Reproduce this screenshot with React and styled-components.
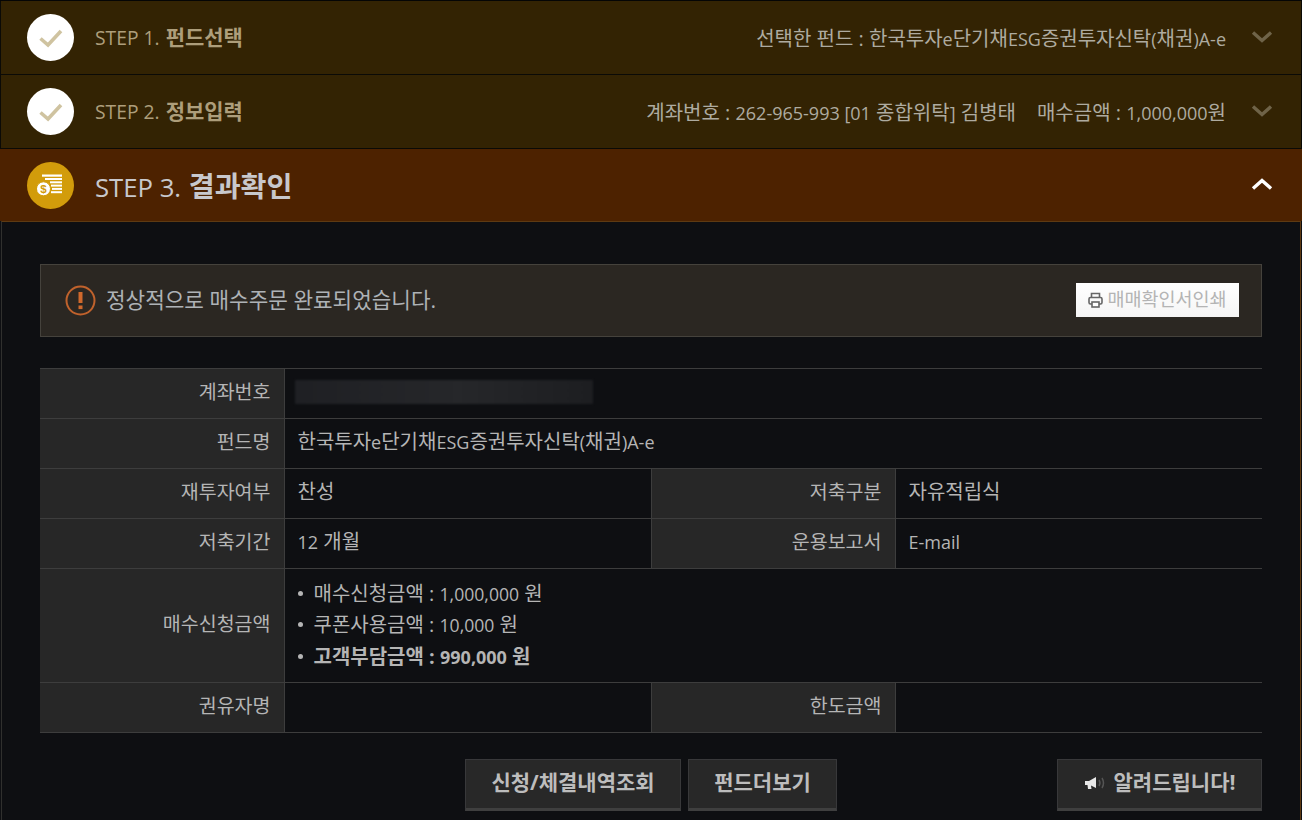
import React from "react";
import styled, { createGlobalStyle } from "styled-components";

const Global = createGlobalStyle`
  html, body { margin: 0; padding: 0; background: #0e0f12; height: 820px; overflow: hidden; }
  body { font-family: "Open Sans", "Noto Sans CJK KR", "Noto Sans", sans-serif; color: #bbb; font-size: 16px; }
  * { box-sizing: border-box; }
`;

const Page = styled.div`
  width: 1302px;
  height: 820px;
  overflow: hidden;
  border-top: 1px solid #050505;
`;

const StepBar = styled.div`
  height: ${p => (p.$active ? "72px" : "74px")};
  border: 1px solid #0b0a06;
  border-width: 0 1px 1px 1px;
  background: ${p => (p.$active ? "#4d2200" : "#332303")};
  display: flex;
  align-items: center;
  padding: 0 28px 0 26px;
  ${p => p.$active && "border: 0; padding-left: 27px; padding-right: 29px;"}
`;

const Circle = styled.span`
  width: 47px;
  height: 47px;
  border-radius: 50%;
  background: ${p => (p.$gold ? "#d29c0b" : "#fff")};
  display: flex;
  align-items: center;
  justify-content: center;
  flex: none;
`;

const StepTitle = styled.div`
  margin-left: 21px;
  font-size: ${p => (p.$active ? "25.7px" : "19.3px")};
  color: ${p => (p.$active ? "#c8c8cc" : "#ad9e7b")};
  line-height: 1;
  white-space: nowrap;
  position: relative;
  top: ${p => (p.$active ? "1px" : "0")};
  b {
    font-weight: 700;
    font-size: ${p => (p.$active ? "28.2px" : "21px")};
    margin-left: 1px;
  }
`;

const Latin = styled.span`
  font-size: ${p => p.$size || 18}px;
`;

const Summary = styled.div`
  margin-left: auto;
  color: #aeaba0;
  font-size: 20px;
  white-space: nowrap;
  display: flex;
  gap: 21px;
`;

const Chevron = styled.svg`
  width: 22px;
  height: 14px;
  margin-left: ${p => (p.$push ? "auto" : "25px")};
  flex: none;
  position: relative;
  top: -1px;
`;

const Panel = styled.div`
  margin: 0 1px;
  border: 1px solid #5e3a12;
  border-bottom: 0;
  border-left-color: #30302e;
  height: 600px;
  padding: 42px 38px 0 38px;
`;

const Notice = styled.div`
  height: 73px;
  background: #2b2722;
  border: 1px solid #45423c;
  display: flex;
  align-items: center;
  padding: 0 22px 0 24px;
`;

const NoticeText = styled.span`
  margin-left: 10px;
  font-size: 21.3px;
  color: #aeb2b6;
  position: relative;
  top: -2px;
`;

const PrintButton = styled.button`
  margin-left: auto;
  width: 163px;
  height: 34px;
  border: 0;
  padding: 0 0 4px;
  background: linear-gradient(#ffffff, #f5f5f5);
  color: #b4b4b4;
  font: inherit;
  font-size: 18.5px;
  display: flex;
  align-items: center;
  justify-content: center;
  gap: 4px;
  position: relative;
  top: -1px;
  svg { position: relative; top: 2px; }
`;

const Table = styled.table`
  width: 1222px;
  margin-top: 31px;
  border-collapse: collapse;
  table-layout: fixed;
  border-top: 1px solid #3d3d3d;
  border-bottom: 1px solid #3d3d3d;
`;

const Row = styled.tr`
  height: ${p => p.$h || 50}px;
  border-bottom: 1px solid #3d3d3d;
`;

const Th = styled.th`
  background: #272727;
  font-weight: 400;
  text-align: right;
  padding: 0 13px 4px 0;
  color: #b5b5b5;
  font-size: 19.5px;
  line-height: 1.2;
  border-right: 1px solid #3d3d3d;
  border-left: ${p => (p.$mid ? "1px solid #3d3d3d" : "0")};
`;

const Td = styled.td`
  padding: 0 13px 4px 13px;
  color: #b5b5b5;
  font-size: 20px;
  line-height: 1.2;
  white-space: nowrap;
`;

const Masked = styled.div`
  width: 298px;
  height: 24px;
  margin: 0 0 0 -3px;
  background: linear-gradient(90deg, #1f2024, #26272a 55%, #1d1e21);
  filter: blur(1px);
`;

const AmountList = styled.ul`
  list-style: none;
  margin: 0;
  padding: 3px 0 0 0;
`;

const AmountItem = styled.li`
  position: relative;
  padding-left: 16px;
  height: 31.5px;
  line-height: 31px;
  font-weight: ${p => (p.$strong ? 700 : 400)};
  &::before {
    content: "";
    position: absolute;
    left: 0;
    top: 13px;
    width: 5px;
    height: 5px;
    border-radius: 50%;
    background: #b5b5b5;
  }
`;

const Actions = styled.div`
  display: grid;
  grid-template-columns: 1fr auto 1fr;
  margin-top: 26px;
`;

const Center = styled.div`
  grid-column: 2;
  display: flex;
  gap: 7px;
`;

const ActionButton = styled.button`
  height: 52px;
  width: ${p => p.$w}px;
  justify-self: ${p => (p.$end ? "end" : "auto")};
  background: #282828;
  border: 1px solid #38383a;
  border-bottom: 3px solid #3f3f3f;
  color: #bdbdbd;
  font: inherit;
  font-size: 21px;
  font-weight: 700;
  line-height: 1;
  display: flex;
  align-items: center;
  justify-content: center;
  gap: 7px;
  padding: 0 0 3px;
`;

const Check = () => (
  <svg width="26" height="20" viewBox="0 0 26 20" fill="none">
    <path d="M2.5 10.5 L10 17 L23 3" stroke="#cfc3a0" strokeWidth="3.6" />
  </svg>
);

const Coin = () => (
  <svg width="28" height="26" viewBox="0 0 28 26">
    <g fill="#fff">
      <rect x="5" y="2.5" width="20" height="2.2" />
      <rect x="8" y="6" width="17" height="2" />
      <rect x="13" y="9.3" width="12" height="2" />
      <rect x="14" y="12.6" width="11" height="2" />
      <rect x="15" y="15.9" width="10" height="2" />
      <rect x="14" y="19.2" width="11" height="2" />
      <circle cx="6.5" cy="16.8" r="7" stroke="#d29c0b" strokeWidth="1" />
    </g>
    <text x="6.5" y="21" textAnchor="middle" fontSize="11.5" fontWeight="700" fill="#d29c0b" fontFamily="Liberation Sans">$</text>
  </svg>
);

const Down = () => (
  <Chevron viewBox="0 0 22 14" fill="none">
    <path d="M2 2.5 L11 10.5 L20 2.5" stroke="#6f6348" strokeWidth="3.4" />
  </Chevron>
);

const Up = () => (
  <Chevron $push viewBox="0 0 22 14" fill="none">
    <path d="M2 11.5 L11 3.5 L20 11.5" stroke="#ffffff" strokeWidth="3.4" />
  </Chevron>
);

const Alert = () => (
  <svg width="31" height="31" viewBox="0 0 31 31" fill="none">
    <circle cx="15.5" cy="15.5" r="14" stroke="#c0622c" strokeWidth="2" />
    <rect x="13.5" y="7" width="4" height="11" fill="#d0692c" />
    <rect x="13.5" y="20.5" width="4" height="3.6" fill="#d0692c" />
  </svg>
);

const Printer = () => (
  <svg width="15" height="16" viewBox="0 0 15 16" fill="none" stroke="#666" strokeWidth="1.6">
    <path d="M3.5 5.5 V1.5 H11.5 V5.5" />
    <rect x="1" y="5.5" width="13" height="6.5" rx="1.5" />
    <rect x="4" y="10" width="7" height="5" fill="#fff" />
  </svg>
);

const Speaker = () => (
  <svg width="23" height="16" viewBox="0 0 23 16">
    <path d="M1 6 L5 6 L12 2 V13 L7 10.5 L7.5 14 L4 14 L3.5 10 L1 10 Z" fill="#e8e8e8" />
    <path d="M15 5 Q17 8 15 11 M18 3 Q21 8 18 13" fill="none" stroke="#555" strokeWidth="1.5" />
  </svg>
);

const FundName = () => (
  <>
    한국투자<Latin>e</Latin>단기채<Latin>ESG</Latin>증권투자신탁<Latin>(</Latin>채권<Latin>)A-e</Latin>
  </>
);

export default function App() {
  return (
    <Page>
      <Global />
      <StepBar>
        <Circle><Check /></Circle>
        <StepTitle>STEP 1. <b>펀드선택</b></StepTitle>
        <Summary>
          <span>선택한 펀드 : <FundName /></span>
        </Summary>
        <Down />
      </StepBar>
      <StepBar>
        <Circle><Check /></Circle>
        <StepTitle>STEP 2. <b>정보입력</b></StepTitle>
        <Summary>
          <span>계좌번호 : <Latin>262-965-993 [01</Latin> 종합위탁<Latin>]</Latin> 김병태</span>
          <span>매수금액 : <Latin>1,000,000</Latin>원</span>
        </Summary>
        <Down />
      </StepBar>
      <StepBar $active>
        <Circle $gold><Coin /></Circle>
        <StepTitle $active>STEP 3. <b>결과확인</b></StepTitle>
        <Up />
      </StepBar>
      <Panel>
        <Notice>
          <Alert />
          <NoticeText>정상적으로 매수주문 완료되었습니다.</NoticeText>
          <PrintButton><Printer />매매확인서인쇄</PrintButton>
        </Notice>
        <Table>
          <colgroup>
            <col style={{ width: 244 }} />
            <col style={{ width: 367 }} />
            <col style={{ width: 244 }} />
            <col />
          </colgroup>
          <tbody>
            <Row>
              <Th>계좌번호</Th>
              <Td colSpan={3}><Masked /></Td>
            </Row>
            <Row>
              <Th>펀드명</Th>
              <Td colSpan={3}><FundName /></Td>
            </Row>
            <Row>
              <Th>재투자여부</Th>
              <Td>찬성</Td>
              <Th $mid>저축구분</Th>
              <Td>자유적립식</Td>
            </Row>
            <Row>
              <Th>저축기간</Th>
              <Td><Latin>12</Latin> 개월</Td>
              <Th $mid>운용보고서</Th>
              <Td><Latin>E-mail</Latin></Td>
            </Row>
            <Row $h={114}>
              <Th>매수신청금액</Th>
              <Td colSpan={3}>
                <AmountList>
                  <AmountItem>매수신청금액 : <Latin $size={17.6}>1,000,000</Latin> 원</AmountItem>
                  <AmountItem>쿠폰사용금액 : <Latin $size={17.6}>10,000</Latin> 원</AmountItem>
                  <AmountItem $strong>고객부담금액 : <Latin>990,000</Latin> 원</AmountItem>
                </AmountList>
              </Td>
            </Row>
            <Row>
              <Th>권유자명</Th>
              <Td></Td>
              <Th $mid>한도금액</Th>
              <Td></Td>
            </Row>
          </tbody>
        </Table>
        <Actions>
          <Center>
            <ActionButton $w={216}>신청/체결내역조회</ActionButton>
            <ActionButton $w={149}>펀드더보기</ActionButton>
          </Center>
          <ActionButton $w={205} $end><Speaker />알려드립니다!</ActionButton>
        </Actions>
      </Panel>
    </Page>
  );
}
